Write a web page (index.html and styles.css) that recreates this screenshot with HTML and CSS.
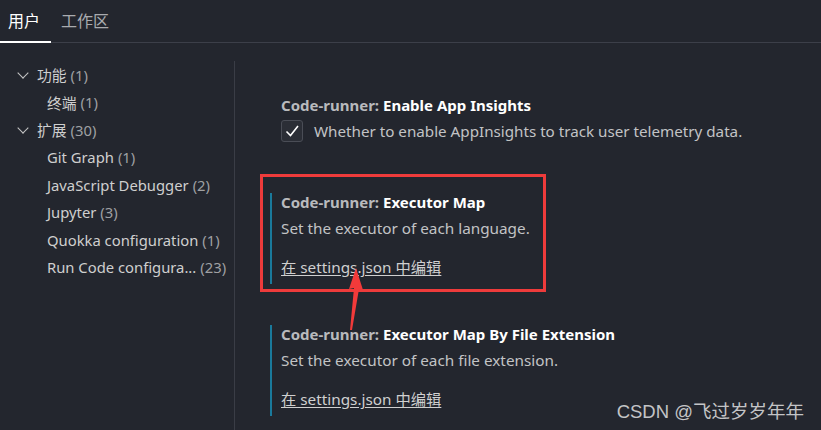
FILE: index.html
```html
<!DOCTYPE html>
<html lang="zh-CN">
<head>
    <meta charset="UTF-8">
    <title>设置</title>
    <link rel="stylesheet" href="styles.css">
</head>
<body>
    <div class="tabs">
        <div class="tab active">用户</div>
        <div class="tab">工作区</div>
    </div>

    <div class="main">
        <div class="tree">
            <div class="tree-row"><span class="chevron"></span>功能 <span class="count">(1)</span></div>
            <div class="tree-row child">终端 <span class="count">(1)</span></div>
            <div class="tree-row"><span class="chevron"></span>扩展 <span class="count">(30)</span></div>
            <div class="tree-row child">Git Graph <span class="count">(1)</span></div>
            <div class="tree-row child">JavaScript Debugger <span class="count">(2)</span></div>
            <div class="tree-row child">Jupyter <span class="count">(3)</span></div>
            <div class="tree-row child">Quokka configuration <span class="count">(1)</span></div>
            <div class="tree-row child">Run Code configura... <span class="count">(23)</span></div>
        </div>

        <div class="content">
            <div class="setting first">
                <div class="setting-title"><span class="cat">Code-runner: </span>Enable App Insights</div>
                <label class="check-row">
                    <span class="checkbox">
                        <svg width="18" height="18" viewBox="0 0 18 18"><path d="M3.5 9.5 L7.5 13.5 L15 4" fill="none" stroke="#fff" stroke-width="1.6"/></svg>
                    </span>
                    Whether to enable AppInsights to track user telemetry data.
                </label>
            </div>

            <div class="highlight">
                <div class="setting modified">
                    <div class="setting-title"><span class="cat">Code-runner: </span>Executor Map</div>
                    <div class="setting-desc">Set the executor of each language.</div>
                    <a class="edit-link" href="#">在 settings.json 中编辑</a>
                </div>
            </div>

            <div class="setting modified">
                <div class="setting-title"><span class="cat">Code-runner: </span>Executor Map By File Extension</div>
                <div class="setting-desc">Set the executor of each file extension.</div>
                <a class="edit-link" href="#">在 settings.json 中编辑</a>
            </div>
        </div>
    </div>

    <!-- 标注箭头 -->
    <svg class="arrow" width="30" height="70" viewBox="0 0 30 70">
        <polygon points="16,0 23,22 19,21 12,62 10,62 14,20 9,21" fill="#f23a3a"/>
    </svg>

    <div class="watermark">CSDN @飞过岁岁年年</div>
</body>
</html>
```

FILE: styles.css
```css
* {
    margin: 0;
    padding: 0;
    box-sizing: border-box;
}

body {
    font-family: "Noto Sans", "Noto Sans CJK SC", sans-serif;
    background: #23262e;
    color: #cccccc;
    width: 821px;
    height: 430px;
    overflow: hidden;
    position: relative;
}

.tabs {
    display: flex;
    height: 43px;
    border-bottom: 1px solid #3c3f49;
}

.tab {
    font-size: 16px;
    line-height: 42px;
    padding: 0 11px 0 8px;
    margin-right: 2px;
    color: #a9abaf;
}

.tab.active {
    color: #ffffff;
    border-bottom: 2px solid #ffffff;
    margin-bottom: -1px;
}

.main {
    display: flex;
    padding-top: 18px;
    height: 387px;
}

.tree {
    width: 235px;
    border-right: 1px solid #3a3d46;
    padding-left: 17px;
}

.tree-row {
    display: flex;
    align-items: center;
    height: 27.5px;
    font-size: 14.8px;
    color: #cfcfcf;
    white-space: nowrap;
}

.tree-row.child {
    padding-left: 30px;
}

.chevron {
    width: 12px;
    height: 12px;
    margin-right: 8px;
    position: relative;
}

.chevron::before {
    content: "";
    position: absolute;
    left: 2px;
    top: 0;
    width: 7px;
    height: 7px;
    border-right: 1.3px solid #c5c5c5;
    border-bottom: 1.3px solid #c5c5c5;
    transform: rotate(45deg);
}

.count {
    color: #9fa0a3;
    margin-left: 4px;
}

.content {
    flex: 1;
    padding-top: 35px;
    padding-left: 35px;
}

.setting {
    border-left: 2px solid transparent;
    padding-left: 9px;
    padding-bottom: 6px;
}

.setting.modified {
    border-left-color: #1a7a9c;
}

.setting.first {
    margin-bottom: 26px;
}

.setting-title {
    font-size: 15px;
    font-weight: bold;
    line-height: 18px;
    color: #ffffff;
}

.setting-title .cat {
    color: #b9babd;
}

.check-row {
    display: flex;
    align-items: center;
    margin-top: 6px;
    font-size: 15.2px;
    color: #c2c3c5;
}

.checkbox {
    width: 22px;
    height: 22px;
    border: 1px solid #4a4d56;
    border-radius: 3px;
    background: #2b2e36;
    display: flex;
    align-items: center;
    justify-content: center;
    margin-right: 11px;
}

.setting-desc {
    margin-top: 8px;
    font-size: 15.3px;
    line-height: 18px;
    color: #c2c3c5;
}

.edit-link {
    display: inline-block;
    margin-top: 21px;
    font-size: 15.3px;
    line-height: 18px;
    color: #d0d0d0;
    text-decoration: underline;
    text-underline-offset: 2px;
}

.highlight {
    width: 286px;
    margin-left: -10px;
    border: 3px solid #ee3b3b;
    padding: 16px 0 5px 7px;
    margin-bottom: 33px;
}

.arrow {
    position: absolute;
    left: 340px;
    top: 268px;
}

.watermark {
    position: absolute;
    right: 17px;
    top: 397px;
    font-family: "Liberation Sans", "Noto Sans CJK SC", sans-serif;
    font-size: 18.5px;
    color: #c3c4c6;
}
```
